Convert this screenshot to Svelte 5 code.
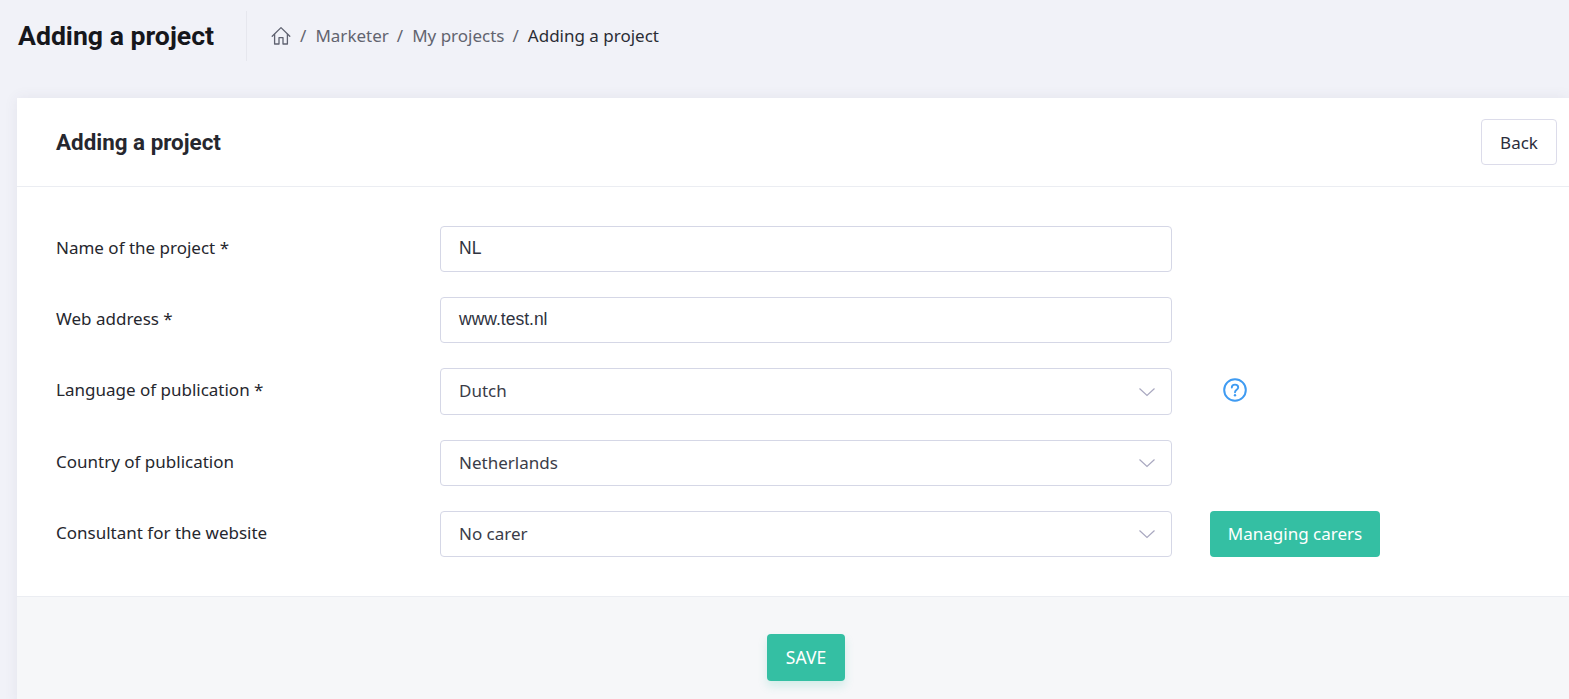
<script>
	const crumbs = ["Marketer", "My projects"];
	const rows = [
		{ label: "Name of the project *", value: "NL", kind: "input" },
		{ label: "Web address *", value: "www.test.nl", kind: "input" },
		{ label: "Language of publication *", value: "Dutch", kind: "select", help: true },
		{ label: "Country of publication", value: "Netherlands", kind: "select" },
		{ label: "Consultant for the website", value: "No carer", kind: "select", action: "Managing carers" }
	];
</script>

<div class="page">
	<header class="subheader">
		<h1>Adding a project</h1>
		<nav class="crumbs">
			<svg class="home" width="20" height="20" viewBox="0 0 20 20" fill="none" stroke="#5f6270" stroke-width="1.3" stroke-linejoin="round" stroke-linecap="round">
				<path d="M1.2 10.2 10 1.6l8.800 8.600" />
				<path d="M3.600 8.400V18h4.400v-6.400h4V18h4.400V8.400" />
			</svg>
			{#each crumbs as c}
				<span class="sep">/</span>
				<span class="link">{c}</span>
			{/each}
			<span class="sep">/</span>
			<span class="current">Adding a project</span>
		</nav>
	</header>

	<section class="card">
		<div class="card-head">
			<h2>Adding a project</h2>
			<button class="back">Back</button>
		</div>

		<div class="form">
			{#each rows as r}
				<div class="row" class:tall={r.kind === "select" && r.help}>
					<span class="label">{r.label}</span>
					{#if r.kind === "input"}
						<div class="field text">{r.value}</div>
					{:else}
						<div class="field select">
							<span>{r.value}</span>
							<svg width="18" height="10" viewBox="0 0 18 10" fill="none" stroke="#a9a8c0" stroke-width="1.2">
								<path d="M1.500 1.500 9 8.500l7.500-7" />
							</svg>
						</div>
					{/if}
					{#if r.help}
						<svg class="help" width="26" height="26" viewBox="0 0 26 26" fill="none">
							<circle cx="13" cy="13" r="10.800" stroke="#3f9bf2" stroke-width="2" />
							<path d="M9.800 10.600c0-1.900 1.400-3 3.200-3s3.200 1.100 3.200 2.800c0 2.400-3.200 2.400-3.200 4.900" stroke="#3f9bf2" stroke-width="1.900" stroke-linecap="round" />
							<circle cx="13" cy="18.300" r="1.200" fill="#3f9bf2" />
						</svg>
					{/if}
					{#if r.action}
						<button class="green action">{r.action}</button>
					{/if}
				</div>
			{/each}
		</div>

		<div class="card-foot">
			<button class="green save">SAVE</button>
		</div>
	</section>
</div>

<style>
	:global(body) {
		margin: 0;
		background: #f1f2f8;
		overflow: hidden;
	}

	.page {
		height: 699px;
		padding-left: 17px;
		font-family: "Noto Sans", "Open Sans", sans-serif;
		color: #212529;
		overflow: hidden;
	}

	.subheader {
		display: flex;
		align-items: center;
		height: 72px;
		margin-bottom: 26px;
	}

	h1 {
		margin: 0;
		padding: 0 32px 0 1px;
		height: 50px;
		border-right: 1px solid #e6e7ee;
		font: 700 26.640px/50px Roboto, sans-serif;
		color: #16171c;
	}

	.crumbs {
		display: flex;
		align-items: center;
		margin-left: 24px;
		margin-top: -1px;
		font-size: 17px;
		color: #62646f;
	}

	.home {
		margin-right: 9px;
	}

	.sep {
		margin-right: 9px;
	}

	.link {
		margin-right: 8px;
	}

	.current {
		color: #2b2d35;
	}

	.card {
		background: #fff;
		box-shadow: 0 0 13px rgba(82, 63, 105, 0.08);
	}

	.card-head {
		display: flex;
		align-items: center;
		justify-content: space-between;
		height: 88px;
		padding: 0 12px 0 39px;
		border-bottom: 1px solid #ebedf2;
	}

	h2 {
		margin: 0;
		font: 700 22.400px/28px Roboto, sans-serif;
		color: #26272e;
	}

	.back {
		width: 76px;
		height: 46px;
		border: 1px solid #dcdcea;
		border-radius: 4px;
		background: #fff;
		font: 17px "Noto Sans", sans-serif;
		color: #2b2d3c;
		padding: 0;
	}

	.form {
		display: flex;
		flex-direction: column;
		gap: 25px;
		padding: 39px;
	}

	.row {
		display: flex;
		align-items: center;
		height: 46px;
		font-size: 17px;
	}

	.row.tall {
		height: 47px;
	}

	.label {
		width: 384px;
		flex: none;
		margin-top: -4px;
		color: #26272e;
	}

	.field {
		box-sizing: border-box;
		width: 732px;
		height: 100%;
		flex: none;
		display: flex;
		align-items: center;
		padding: 0 15px 2px 18px;
		border: 1px solid #d5d7e6;
		border-radius: 4px;
		color: #3a3c48;
	}

	.text {
		font: 17.500px "Liberation Sans", Arial, sans-serif;
		color: #2f3340;
	}

	.select svg {
		margin-top: 2px;
	}

	.select {
		justify-content: space-between;
	}

	.help {
		margin-left: 50px;
		margin-top: -3px;
	}

	.green {
		border: none;
		border-radius: 4px;
		background: #34bfa3;
		color: #fff;
		font: 17px "Noto Sans", sans-serif;
		padding: 0 0 2px;
	}

	.action {
		width: 170px;
		height: 46px;
		margin-left: 38px;
	}

	.card-foot {
		display: flex;
		justify-content: center;
		height: 110px;
		padding: 37px 0 0 26px;
		box-sizing: border-box;
		background: #f6f7f9;
		border-top: 1px solid #ebedf2;
	}

	.save {
		width: 78px;
		height: 47px;
		font-size: 17.500px;
		box-shadow: 0 5px 10px rgba(52, 191, 163, 0.19);
	}
</style>
